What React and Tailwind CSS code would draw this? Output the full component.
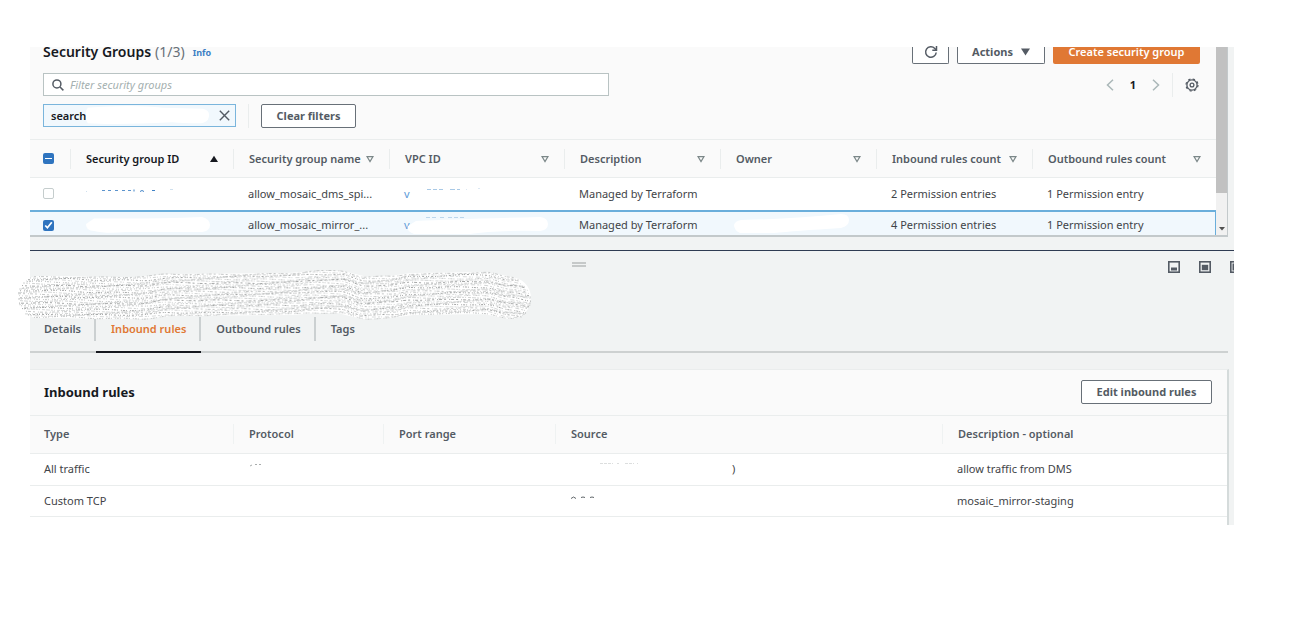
import React from "react";

const CENTER = [
  [18, 297], [60, 297], [100, 298], [140, 298], [170, 295], [290, 294], [315, 292],
  [340, 292], [365, 298], [390, 297], [412, 294], [485, 293], [510, 298], [532, 301],
];

function centerAt(x) {
  for (let i = 1; i < CENTER.length; i++) {
    const [x0, y0] = CENTER[i - 1];
    const [x1, y1] = CENTER[i];
    if (x <= x1) {
      const t = (x - x0) / (x1 - x0);
      return y0 + (y1 - y0) * t * t * (3 - 2 * t);
    }
  }
  return 301;
}

function strand(offset, index) {
  const reach = Math.sqrt(Math.max(0, 21 * 21 - offset * offset));
  const start = Math.round(39 - reach);
  const end = Math.round(510 + reach);
  let d = "";
  for (let x = start; x <= end; x += 3) {
    const ripple = Math.sin(x / 9 + index * 1.7) * 0.5 + Math.sin(x / 31 + index) * 0.6;
    const y = centerAt(x) + offset + ripple;
    d += `${d ? "L" : "M"}${x - 18} ${(y - 270).toFixed(1)}`;
  }
  return d;
}

const DASHES = ["2 3 1 1 3 2", "3 1 1 2 1 2", "1 2 2 2 1 1", "2 1 1 3 4 2", "1 1 2 1 1 3", "4 1 2 1 1 2 3 1"];
const TONES = ["#c6c8c8", "#d2d4d4", "#cacccc", "#d8dada"];

function Scribble() {
  const offsets = Array.from({ length: 29 }, (_, i) => -20.5 + i * 1.46);
  const base = CENTER.slice(1, -1).map(([x, y]) => `${x - 18} ${y - 270}`);
  return (
    <svg aria-hidden="true" className="absolute -left-3 top-[19px] h-[52px] w-[516px]" viewBox="0 0 516 52">
      <path d={`M21 27L${base.join("L")}`} fill="none" stroke="#fff" strokeWidth="42" strokeLinecap="round" strokeLinejoin="round" />
      {offsets.map((o, i) => (
        <path
          key={i}
          d={strand(o, i)}
          fill="none"
          stroke={i % 4 === 2 ? "#a6a8a8" : TONES[i % 4]}
          strokeWidth="1"
          strokeDasharray={DASHES[i % 6]}
          strokeDashoffset={(i * 7) % 11}
        />
      ))}
    </svg>
  );
}

function Sort({ active }) {
  return active ? (
    <svg aria-hidden="true" className="h-2 w-2 shrink-0" viewBox="0 0 8 8"><path d="M4 .8 8 7H0z" fill="#16191f" /></svg>
  ) : (
    <svg aria-hidden="true" className="h-2 w-2 shrink-0" viewBox="0 0 8 8"><path d="M1 1.6h6L4 6.600z" fill="none" stroke="#7b8788" strokeWidth="1.2" /></svg>
  );
}

const columns = [
  { label: "Security group ID", width: "w-[163px]", active: true },
  { label: "Security group name", width: "w-[156px]" },
  { label: "VPC ID", width: "w-[175px]" },
  { label: "Description", width: "w-[156px]" },
  { label: "Owner", width: "w-[156px]" },
  { label: "Inbound rules count", width: "w-[156px]" },
  { label: "Outbound rules count", width: "w-[184px]" },
];

function GroupsTable() {
  return (
    <table className="w-full table-fixed border-collapse text-left">
      <thead>
        <tr className="h-[38px] border-y border-[#eaeded]">
          <th className="w-10 p-0 pl-[13px]">
            <button aria-label="Clear selection" className="flex h-[11px] w-[11px] items-center justify-center rounded-xs bg-[#2f74bf]">
              <span className="h-px w-[7px] bg-white" />
            </button>
          </th>
          {columns.map((c) => (
            <th key={c.label} className={`${c.width} p-0 font-semibold ${c.active ? "text-[#16191f]" : "text-[#545b64]"}`}>
              <button className="flex h-5 w-full items-center justify-between border-l border-[#eaeded] pl-[15px] pr-[15px] whitespace-nowrap">
                {c.label}
                <Sort active={c.active} />
              </button>
            </th>
          ))}
        </tr>
      </thead>
      <tbody>
        <tr className="h-[33px] bg-white">
          <td className="p-0 pl-[13px]">
            <input type="checkbox" aria-label="Select allow_mosaic_dms_spi" className="block h-[11px] w-[11px] appearance-none rounded-xs border border-[#c5cdcd] bg-white" />
          </td>
          <td className="p-0 pl-4">
            <svg aria-hidden="true" className="h-5 w-[130px]" viewBox="0 0 130 20">
              <path d="M16 6.500h3M22 6.500h3M29 6.500h3M36 6.500h3M42 6.500h3" stroke="#5c94cd" />
              <path d="M48 5.500v2M54 7.500q2-2 4 0M66 6.500h3" stroke="#3f82c6" fill="none" />
              <path d="M0 7.500h1M84 5.500h3" stroke="#cfe0ee" />
            </svg>
          </td>
          <td className="p-0 pl-[15px]">allow_mosaic_dms_spi...</td>
          <td className="p-0 pl-[15px]">
            <a href="#vpc" className="flex items-center text-[#5c9bd8]">v
              <svg aria-hidden="true" className="ml-4 h-5 w-20" viewBox="0 0 80 20"><path d="M1 5.500h4M7 5.500h4M13 5.500h4M24 5.500h5M31 5.500h3" stroke="#a9c9e6" /><path d="M40 5.500h1M52 4.500h2" stroke="#dce8f3" /></svg>
            </a>
          </td>
          <td className="p-0 pl-[15px]">Managed by Terraform</td>
          <td className="p-0" />
          <td className="p-0 pl-[15px]">2 Permission entries</td>
          <td className="p-0 pl-[15px]">1 Permission entry</td>
        </tr>
        <tr className="h-6 border-t-2 border-[#6aaedb] bg-[#f1f8fd]">
          <td className="p-0 pt-1 pl-[13px]">
            <input type="checkbox" defaultChecked aria-label="Select allow_mosaic_mirror" className="block h-[11px] w-[11px] accent-[#2f74bf]" />
          </td>
          <td className="p-0 pt-1 pl-4">
            <svg aria-hidden="true" className="block h-4 w-[124px]" viewBox="0 0 124 16"><path d="M8 1.500Q70 2 116 0q8 2 8 8t-8 7H40Q20 17 8 14 0 14 0 7z" fill="#fff" /></svg>
          </td>
          <td className="p-0 pt-1 pl-[15px]">allow_mosaic_mirror_...</td>
          <td className="p-0 pt-1 pl-[15px]">
            <a href="#vpc" className="flex h-4 items-center text-[#5c9bd8]">v
              <svg aria-hidden="true" className="-ml-1 h-5 w-[142px] shrink-0" viewBox="0 0 142 20"><path d="M20 2.500h12M34 2.500h4M42 2.500h16" stroke="#bcd6ec" strokeDasharray="4 2" /><path d="M10 6Q50 4 134 2q8 1 8 7t-8 7q-45-1-70 3H8q-8-3-6-8z" fill="#fff" /></svg>
            </a>
          </td>
          <td className="p-0 pt-1 pl-[15px]">Managed by Terraform</td>
          <td className="p-0 pl-3.5">
            <svg aria-hidden="true" className="block h-5 w-[115px]" viewBox="0 0 115 20"><path d="M7 7Q60 6 107 1q8 0 8 6t-8 8Q60 18 40 20H6q-6-3-6-8 1-4 7-5z" fill="#fff" /></svg>
          </td>
          <td className="p-0 pt-1 pl-[15px]">4 Permission entries</td>
          <td className="p-0 pt-1 pl-[15px] shadow-[inset_-1px_0_#6aaedb]">1 Permission entry</td>
        </tr>
      </tbody>
    </table>
  );
}

const buttonBase = "flex items-center justify-center border-[#687078] bg-white font-bold text-[#545b64] whitespace-nowrap";
const outlineButton = `${buttonBase} h-6 rounded-xs border`;
const headerButton = `${buttonBase} h-[17px] rounded-b-xs border border-t-0 pb-[6px]`;

function GroupsPanel() {
  return (
    <section className="mr-[6px] flex border-r border-b-2 border-[#c3c9cb] bg-[#fafafa]">
      <div className="min-w-0 flex-1">
        <div className="flex h-[17px] items-center justify-between pr-4 pl-[13px]">
          <h1 className="flex items-center gap-1 pb-[7px] text-[14px] font-semibold whitespace-nowrap text-[#16191f]">
            Security Groups
            <span className="font-normal text-[#687078]">(1/3)</span>
            <a href="#info" className="ml-1 pt-0.5 text-[9px] font-bold text-[#3c7fc4]">Info</a>
          </h1>
          <div className="flex gap-2">
            <button aria-label="Refresh" className={`${headerButton} w-[37px]`}>
              <svg className="h-[14px] w-[14px] shrink-0" viewBox="0 0 14 14" fill="none" stroke="#545b64" strokeWidth="1.500"><path d="M12.200 7.500A5.300 5.300 0 1 1 10.800 3.400L12.300 5" /><path d="M12.500 1v4.200H8.300" /></svg>
            </button>
            <button className={`${headerButton} w-[88px] gap-2`}>
              Actions
              <svg aria-hidden="true" className="h-2 w-[9px]" viewBox="0 0 9 8"><path d="M0 .5h9L4.500 7.500z" fill="#545b64" /></svg>
            </button>
            <button className="flex h-[17px] w-[147px] items-center justify-center rounded-b-xs bg-[#e07834] pb-[7px] font-semibold whitespace-nowrap text-white">Create security group</button>
          </div>
        </div>
        <div className="mt-[9px] flex items-center justify-between pr-[17px] pl-[13px]">
          <label className="flex h-[23px] w-[49%] items-center gap-[6px] border border-[#b9c3c3] bg-white pl-2">
            <svg aria-hidden="true" className="h-3 w-3" viewBox="0 0 12 12" fill="none" stroke="#545b64" strokeWidth="1.500"><circle cx="4.900" cy="4.900" r="4" /><path d="m8 8 3.400 3.400" /></svg>
            <input aria-label="Filter security groups" placeholder="Filter security groups" className="min-w-0 flex-1 bg-transparent outline-none placeholder:text-[#a4b0b0] placeholder:italic" />
          </label>
          <nav aria-label="Pagination" className="flex h-[23px] items-center">
            <button aria-label="Previous page"><svg className="h-3 w-2" viewBox="0 0 8 12" fill="none" stroke="#aab7b8" strokeWidth="1.500"><path d="M7 .8 1.500 6 7 11.200" /></svg></button>
            <button className="w-[38px] font-bold text-[#16191f]">1</button>
            <button aria-label="Next page"><svg className="h-3 w-2" viewBox="0 0 8 12" fill="none" stroke="#aab7b8" strokeWidth="1.500"><path d="M1 .8 6.500 6 1 11.200" /></svg></button>
            <span className="mx-3 h-6 w-px bg-[#eaeded]" />
            <button aria-label="Preferences">
              <svg className="h-[14px] w-[14px]" viewBox="0 0 14 14" fill="none" stroke="#545b64" strokeWidth="1.300"><circle cx="7" cy="7" r="5.100" /><circle cx="7" cy="7" r="1.900" /><circle cx="7" cy="7" r="6" strokeDasharray="2.400 2.310" strokeWidth="1.200" /></svg>
            </button>
          </nav>
        </div>
        <div className="mt-2 flex h-[23px] items-center pl-[13px]">
          <div className="flex h-[23px] w-[193px] items-center border border-[#7ab5dc] bg-[#f1f8fd] pr-[5px] pl-[7px] font-semibold text-[#16191f]">
            search
            <svg aria-hidden="true" className="h-[21px] min-w-0 flex-1" viewBox="0 0 130 22" preserveAspectRatio="none"><path d="M0 3Q50-1 80 3l42 1q8 2 6 9-1 5-8 6-20 0-30-1-60 3-88 1-6-8 0-16z" fill="#fff" /></svg>
            <button aria-label="Remove filter" className="ml-2">
              <svg className="h-[11px] w-[11px]" viewBox="0 0 11 11" stroke="#545b64" strokeWidth="1.400"><path d="m.8.8 9.400 9.400M10.200.8.8 10.200" /></svg>
            </button>
          </div>
          <span className="mx-3 h-6 w-px bg-[#eaeded]" />
          <button className={`${outlineButton} w-[95px]`}>Clear filters</button>
        </div>
        <div className="mt-3">
          <GroupsTable />
        </div>
      </div>
      <div aria-hidden="true" className="flex w-[11px] shrink-0 flex-col items-center justify-between bg-[#f1f1f1] pb-1">
        <span className="h-[146px] w-full bg-[#c1c1c1]" />
        <svg className="h-1 w-[6px]" viewBox="0 0 6 4"><path d="M0 0h6L3 3.500z" fill="#505050" /></svg>
      </div>
    </section>
  );
}

function PaneIcon({ kind }) {
  return (
    <svg className="h-3 w-3" viewBox="0 0 12 12">
      <rect x=".8" y=".8" width="10.400" height="10.400" fill="none" stroke="#545b64" strokeWidth="1.600" />
      {kind === "low" && <path d="M3 6.500h6v3H3z" fill="#545b64" />}
      {kind === "mid" && <path d="M2.800 3.800h6.400v5.400H2.800z" fill="#545b64" />}
      {kind === "full" && <path d="M2.500 2.500h7v7h-7z" fill="#545b64" />}
    </svg>
  );
}

const tabs = ["Details", "Inbound rules", "Outbound rules", "Tags"];

function RulesTable() {
  const head = "p-0 font-semibold";
  const label = "flex h-5 items-center border-l border-[#eff2f2] pl-[15px]";
  return (
    <table className="w-full table-fixed border-collapse text-left">
      <thead>
        <tr className="h-[38px] border-y border-[#eaeded] bg-[#fafafa] text-[#545b64]">
          <th className={`${head} w-[203px] pl-3.5`}>Type</th>
          <th className={`${head} w-[150px]`}><div className={label}>Protocol</div></th>
          <th className={`${head} w-[172px]`}><div className={label}>Port range</div></th>
          <th className={`${head} w-[387px]`}><div className={label}>Source</div></th>
          <th className={`${head} w-[285px]`}><div className={label}>Description - optional</div></th>
        </tr>
      </thead>
      <tbody>
        <tr className="h-8 border-b border-[#eaeded]">
          <td className="p-0 pl-3.5">All traffic</td>
          <td className="p-0 pl-4"><svg aria-hidden="true" className="block h-5 w-5" viewBox="0 0 20 20"><path d="m1 7 2-1M6 5.500h2M10 5.500h2" stroke="#a9adad" /></svg></td>
          <td className="p-0" />
          <td className="p-0 pl-[44px]">
            <div className="flex items-center">
              <svg aria-hidden="true" className="h-5 w-[133px]" viewBox="0 0 133 20"><path d="M1 4.500h13M18 4.500h2M26 4.500h9M38 4.500h1" stroke="#dcdede" strokeDasharray="3 1" /></svg>
              )
            </div>
          </td>
          <td className="p-0 pl-[15px]">allow traffic from DMS</td>
        </tr>
        <tr className="h-[31px] border-b border-[#eaeded]">
          <td className="p-0 pl-3.5">Custom TCP</td>
          <td className="p-0" />
          <td className="p-0" />
          <td className="p-0 pl-4"><svg aria-hidden="true" className="block h-5 w-12" viewBox="0 0 48 20"><path d="M0 7.500q2.500-3 5 0M10 6.500q2-1 4 0M19 6.500q2-1 4 0" fill="none" stroke="#60666a" /></svg></td>
          <td className="p-0 pl-[15px]">mosaic_mirror-staging</td>
        </tr>
      </tbody>
    </table>
  );
}

function DetailsPanel() {
  return (
    <section className="relative border-t border-[#2f3b52]">
      <div className="relative flex h-[66px] items-start justify-end overflow-hidden">
        <span aria-hidden="true" className="absolute top-[11px] left-[45%] h-[5px] w-3.5 border-y-2 border-[#c6c9c9]" />
        <div className="-mr-[8px] flex gap-[19px] pt-[10px]">
          <button aria-label="Minimise panel"><PaneIcon kind="low" /></button>
          <button aria-label="Half-height panel"><PaneIcon kind="mid" /></button>
          <button aria-label="Full-height panel"><PaneIcon kind="full" /></button>
        </div>
      </div>
      <Scribble />
      <div role="tablist" className="mr-[6px] flex h-9 border-b-2 border-[#cdd1d1] font-semibold text-[#545b64]">
        {tabs.map((t, i) => (
          <button
            key={t}
            role="tab"
            aria-selected={i === 1}
            className={`-mb-0.5 flex h-9 items-start border-b-2 whitespace-nowrap ${i === 1 ? "border-[#16191f] text-[#e07834]" : "border-transparent"}`}
          >
            <span className={`flex h-6 items-center ${i === 0 ? "pl-3.5" : "pl-[15px]"} ${i < 3 ? "border-r-2 border-[#cbd0d1] pr-[13px]" : ""}`}>{t}</span>
          </button>
        ))}
      </div>
      <div className="mt-4 mr-[5px] border-t border-r-2 border-t-[#eaeded] border-r-[#d5dbdb] bg-white pb-2">
        <div className="flex h-[45px] items-center justify-between bg-[#fafafa] pr-[15px] pl-3.5">
          <h2 className="text-[13px] font-bold text-[#16191f]">Inbound rules</h2>
          <button className={`${outlineButton} w-[131px]`}>Edit inbound rules</button>
        </div>
        <RulesTable />
      </div>
    </section>
  );
}

export default function App() {
  return (
    <main className="min-h-screen bg-white pt-[47px] pr-16 pl-[30px] font-['Noto_Sans','Open_Sans',sans-serif] text-[11px] leading-4 text-[#3f4448]">
      <div className="bg-[#f1f3f3]">
        <GroupsPanel />
        <div className="h-[13px]" />
        <DetailsPanel />
      </div>
    </main>
  );
}
